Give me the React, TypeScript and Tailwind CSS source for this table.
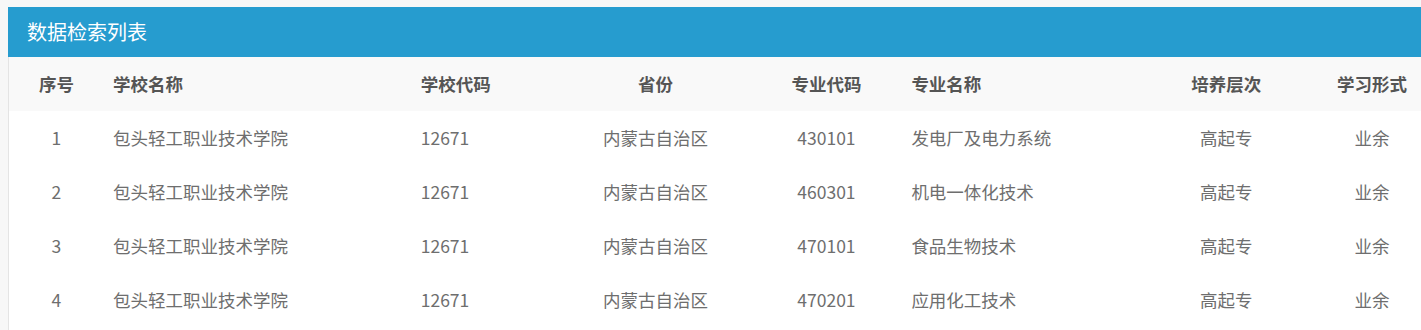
const columns = [
  { label: "序号", w: "w-[95px]", align: "text-center" },
  { label: "学校名称", w: "w-[309px]", align: "text-left pl-[9px]" },
  { label: "学校代码", w: "w-[148px]", align: "text-left pl-[8px]" },
  { label: "省份", w: "w-[190px]", align: "text-center" },
  { label: "专业代码", w: "w-[152px]", align: "text-center" },
  { label: "专业名称", w: "w-[248px]", align: "text-left pl-[9px]" },
  { label: "培养层次", w: "w-[152px]", align: "text-center" },
  { label: "学习形式", w: "w-[140px]", align: "text-center" },
];

const rows = [
  ["1", "包头轻工职业技术学院", "12671", "内蒙古自治区", "430101", "发电厂及电力系统", "高起专", "业余"],
  ["2", "包头轻工职业技术学院", "12671", "内蒙古自治区", "460301", "机电一体化技术", "高起专", "业余"],
  ["3", "包头轻工职业技术学院", "12671", "内蒙古自治区", "470101", "食品生物技术", "高起专", "业余"],
  ["4", "包头轻工职业技术学院", "12671", "内蒙古自治区", "470201", "应用化工技术", "高起专", "业余"],
];

export default function App() {
  return (
    <div
      className="w-[1421px] h-[330px] overflow-hidden bg-[#f7f7f7] pt-[7px] pl-[8px]"
      style={{ fontFamily: '"Microsoft YaHei", "Noto Sans CJK SC", "Noto Sans", sans-serif' }}
    >
      <div className="w-[1434px] min-h-[340px] bg-white border-l border-[#e4e4e4]">
        {/* Panel title */}
        <div className="h-[50px] bg-[#269ccf] -ml-px flex items-center pl-[19px]">
          <span className="text-[20px] text-white">数据检索列表</span>
        </div>

        {/* Column header */}
        <div className="flex h-[54px] items-center bg-[#f9f9f9]">
          {columns.map((c) => (
            <div key={c.label} className={`${c.w} ${c.align} text-[17.5px] font-bold text-[#555]`}>
              {c.label}
            </div>
          ))}
        </div>

        {/* Rows */}
        {rows.map((r) => (
          <div key={r[0]} className="flex h-[54px] items-center bg-white">
            {r.map((cell, i) => (
              <div key={i} className={`${columns[i].w} ${columns[i].align} text-[17.5px] text-[#6e6e6e]`}>
                {cell}
              </div>
            ))}
          </div>
        ))}
      </div>
    </div>
  );
}
